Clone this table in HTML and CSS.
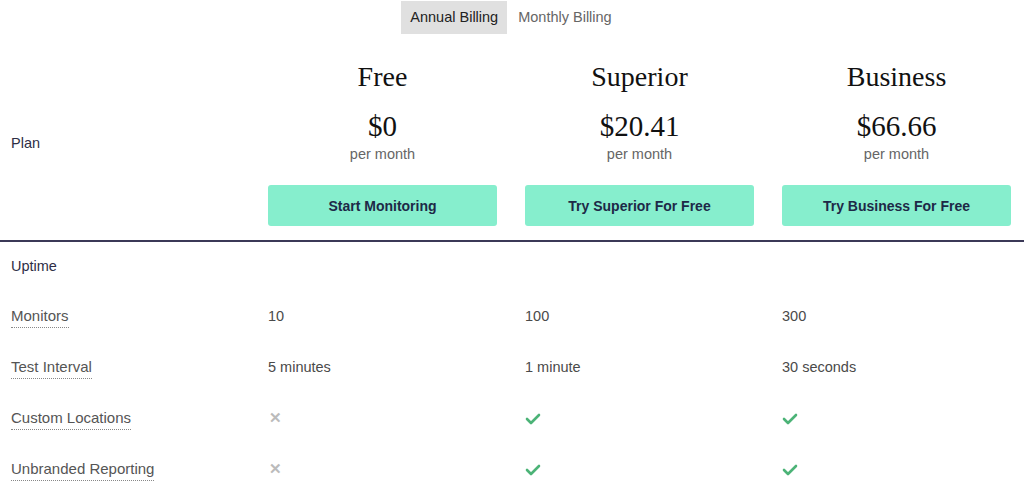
FILE: index.html
```html
<!DOCTYPE html>
<html lang="en">
<head>
    <meta charset="UTF-8">
    <title>Pricing</title>
    <link rel="stylesheet" href="styles.css">
</head>
<body>

    <!-- Billing toggle -->
    <div class="billing-toggle">
        <span class="toggle-item active">Annual Billing</span>
        <span class="toggle-item">Monthly Billing</span>
    </div>

    <!-- Plans header -->
    <div class="plans-head">
        <div class="row-label">Plan</div>
        <div class="plan">
            <h2>Free</h2>
            <div class="price">$0</div>
            <div class="period">per month</div>
            <button>Start Monitoring</button>
        </div>
        <div class="plan">
            <h2>Superior</h2>
            <div class="price">$20.41</div>
            <div class="period">per month</div>
            <button>Try Superior For Free</button>
        </div>
        <div class="plan">
            <h2>Business</h2>
            <div class="price">$66.66</div>
            <div class="period">per month</div>
            <button>Try Business For Free</button>
        </div>
    </div>

    <!-- Features -->
    <div class="features">
        <div class="feature-row section-row">
            <div class="section-title">Uptime</div>
            <div></div><div></div><div></div>
        </div>
        <div class="feature-row">
            <div><span class="feature-name">Monitors</span></div>
            <div class="value">10</div>
            <div class="value">100</div>
            <div class="value">300</div>
        </div>
        <div class="feature-row">
            <div><span class="feature-name">Test Interval</span></div>
            <div class="value">5 minutes</div>
            <div class="value">1 minute</div>
            <div class="value">30 seconds</div>
        </div>
        <div class="feature-row">
            <div><span class="feature-name">Custom Locations</span></div>
            <div class="value"><span class="no">&#x2715;</span></div>
            <div class="value">
                <svg class="yes" width="16" height="12" viewBox="0 0 16 12"><polyline points="2,6 6,10 14,2" fill="none" stroke="#4cb377" stroke-width="2.6" stroke-linecap="round" stroke-linejoin="round"/></svg>
            </div>
            <div class="value">
                <svg class="yes" width="16" height="12" viewBox="0 0 16 12"><polyline points="2,6 6,10 14,2" fill="none" stroke="#4cb377" stroke-width="2.6" stroke-linecap="round" stroke-linejoin="round"/></svg>
            </div>
        </div>
        <div class="feature-row">
            <div><span class="feature-name">Unbranded Reporting</span></div>
            <div class="value"><span class="no">&#x2715;</span></div>
            <div class="value">
                <svg class="yes" width="16" height="12" viewBox="0 0 16 12"><polyline points="2,6 6,10 14,2" fill="none" stroke="#4cb377" stroke-width="2.6" stroke-linecap="round" stroke-linejoin="round"/></svg>
            </div>
            <div class="value">
                <svg class="yes" width="16" height="12" viewBox="0 0 16 12"><polyline points="2,6 6,10 14,2" fill="none" stroke="#4cb377" stroke-width="2.6" stroke-linecap="round" stroke-linejoin="round"/></svg>
            </div>
        </div>
    </div>

</body>
</html>
```

FILE: styles.css
```css
body {
    margin: 0;
    font-family: "Liberation Sans", Arial, sans-serif;
    font-size: 14.5px;
    color: #4a4a4a;
    background: white;
}

/* Toggle annuel / mensuel */
.billing-toggle {
    display: flex;
    justify-content: center;
    gap: 2px;
    padding-top: 1px;
    padding-right: 2px;
}
.toggle-item {
    padding: 8px 9px;
    font-size: 14.5px;
    color: #666;
    line-height: 17px;
}
.toggle-item.active {
    background-color: #e0e0e0;
    color: #222;
}

/* En-tete des plans */
.plans-head {
    display: grid;
    grid-template-columns: 253px 257px 257px 257px;
    border-bottom: 2px solid #3b3957;
    padding-bottom: 14px;
}
.row-label {
    display: flex;
    align-items: center;
    padding-left: 11px;
    padding-top: 26px;
    color: #2e2e45;
}
.plan {
    display: flex;
    flex-direction: column;
    align-items: center;
    padding: 0 13px 0 15px;
}
.plan h2 {
    font-family: "Liberation Serif", "Times New Roman", serif;
    font-weight: normal;
    font-size: 28px;
    color: #111;
    margin: 27px 0 0;
    line-height: 32px;
}
.price {
    font-family: "Liberation Serif", "Times New Roman", serif;
    font-size: 29px;
    color: #111;
    margin-top: 17px;
    line-height: 32px;
}
.period {
    font-size: 14.5px;
    color: #666;
    line-height: 18px;
    margin-top: 3px;
}
.plan button {
    width: 100%;
    height: 41px;
    margin-top: 22px;
    background-color: #86eecd;
    color: #1d2947;
    border: none;
    border-radius: 3px;
    font-family: "Liberation Sans", Arial, sans-serif;
    font-weight: bold;
    font-size: 14px;
    cursor: pointer;
}

/* Lignes des fonctionnalites */
.feature-row {
    display: grid;
    grid-template-columns: 253px 257px 257px 257px;
    height: 51px;
    align-items: center;
}
.section-row {
    height: 48px;
}
.feature-row > div:first-child {
    padding-left: 11px;
}
.section-title {
    color: #2e2e45;
}
.feature-name {
    color: #555;
    font-size: 15px;
    border-bottom: 1px dotted #888;
    padding-bottom: 3px;
    display: inline-block;
    margin-top: 4px;
}
.value {
    padding-left: 15px;
    color: #4a4a4a;
}
.no {
    color: #bbb;
    font-size: 15px;
    font-weight: bold;
    padding-left: 1px;
}
.yes {
    vertical-align: middle;
}
```
